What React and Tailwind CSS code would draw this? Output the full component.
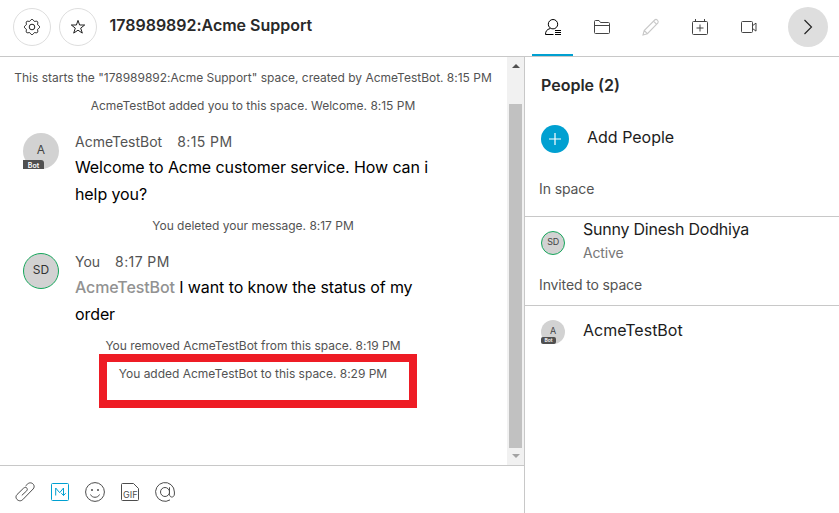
const icon = "fill-none stroke-current";

function SystemLine({ children, className = "" }) {
  return (
    <div className={`h-7 pr-px text-center text-[12px] leading-7 tracking-[-0.012px] whitespace-nowrap text-[#535353] ${className}`}>
      {children}
    </div>
  );
}

function Message({ avatar, name, time, children }) {
  return (
    <div className="mt-2.5 flex h-[78px] pl-[23px]">
      <div className="mt-[3px] w-[52px] shrink-0">{avatar}</div>
      <div className="whitespace-nowrap">
        <div className="flex h-6 gap-4 text-[14px] leading-6 text-[#535353]">
          <span className="-mr-px">{name}</span>
          <span className="tracking-[0.4px]">{time}</span>
        </div>
        <div className="text-[16px] leading-[27px] tracking-[-0.09px] text-black">{children}</div>
      </div>
    </div>
  );
}

function Gear() {
  const points = Array.from({ length: 64 }, (_, i) => {
    const a = (i / 64) * Math.PI * 2;
    const r = 6.9 + 0.8 * Math.cos(8 * a);
    return `${(8 + r * Math.sin(a)).toFixed(2)},${(8 - r * Math.cos(a)).toFixed(2)}`;
  }).join(" ");
  return (
    <svg width="16" height="16" viewBox="0 0 16 16" className={icon}>
      <polygon points={points} />
      <circle cx="8" cy="8" r="2.8" />
    </svg>
  );
}

function Header() {
  return (
    <header className="flex h-[57px] shrink-0 border-b border-[#c8c8c8]">
      <div className="flex w-[532px] pl-[13px] pt-2 text-[#222]">
        <div className="flex size-[38px] items-center justify-center rounded-full border border-[#dedede]">
          <Gear />
        </div>
        <div className="ml-2 flex size-[38px] items-center justify-center rounded-full border border-[#dedede]">
          <svg width="16" height="16" viewBox="0 0 16 16" className={icon}>
            <path d="M8 1.4 9.6 6h5.1l-4 3.1 1.6 5L8 11.2l-4.3 2.9 1.6-5-4-3.1h5.1z" />
          </svg>
        </div>
        <h1 className="ml-[12.5px] mt-[5px] text-[16px] leading-6 font-semibold tracking-[-0.02px] whitespace-nowrap text-[#292929]">
          178989892:Acme Support
        </h1>
      </div>
      <nav className="flex h-14 text-[#444]">
        <div className="flex w-[41px] justify-center border-b-2 border-[#00a0d1] pt-[18px] text-black">
          <svg width="18" height="18" viewBox="0 0 18 18" className={icon}>
            <circle cx="9" cy="6.2" r="4.700" />
            <path d="M9.500 16.500H1.500c0-3.300 1.300-5 4.700-6M11 12.500h6M11 14.500h6M11 16.500h6" />
          </svg>
        </div>
        <div className="flex w-[57px] justify-center pt-[18px]">
          <svg width="18" height="18" viewBox="0 0 18 18" className={icon}>
            <path d="M1.500 3.500Q1.500 2.500 2.500 2.500H6L7.500 4.500H15.500Q16.500 4.500 16.500 5.500V14.500Q16.500 15.500 15.500 15.500H2.500Q1.500 15.500 1.500 14.500ZM1.500 7.500H16.500" />
          </svg>
        </div>
        <div className="flex w-[41px] justify-center pt-[18px] text-[#c8c8c8]">
          <svg width="18" height="18" viewBox="0 0 18 18" className={icon} strokeWidth="1.1">
            <path d="m1 17 1.200-4.500L12.700 2Q14 .8 15.400 2.100T15.900 5L5.400 15.700ZM11.500 3.200l3.200 3.200M2.200 12.500l3.200 3.200" />
          </svg>
        </div>
        <div className="flex w-[57px] justify-center pt-[18px]">
          <svg width="18" height="18" viewBox="0 0 18 18" className={icon}>
            <rect x="1.500" y="3.500" width="15" height="13" rx="1" />
            <path d="M4.500 1v2.500M13.500 1v2.500M9 6.500v7M5.500 10h7" />
          </svg>
        </div>
        <div className="flex w-[41px] justify-center pt-[18px]">
          <svg width="18" height="18" viewBox="0 0 18 18" className={icon}>
            <rect x="1.500" y="3.500" width="11" height="11" rx="1" />
            <path d="m12.500 7.700 3.500-2.600v8l-3.500-2.600" />
          </svg>
        </div>
        <div className="ml-[19px] mt-[7px] flex size-10 items-center justify-center rounded-full bg-[#dedede] text-[#222]">
          <svg width="16" height="16" viewBox="0 0 16 16" className={icon} strokeWidth="1.150">
            <path d="m4.500 1 7 7-7 7" />
          </svg>
        </div>
      </nav>
    </header>
  );
}

function Scrollbar() {
  return (
    <div className="flex w-[17px] shrink-0 flex-col items-center bg-[#f1f1f1]">
      <svg width="17" height="17" className="shrink-0">
        <path d="M5 11h8L9 7z" fill="#505050" />
      </svg>
      <div className="mt-[30px] h-[344px] w-[13px] bg-[#c1c1c1]" />
      <svg width="17" height="17" className="shrink-0">
        <path d="M5 6h8L9 10z" fill="#a3a3a3" />
      </svg>
    </div>
  );
}

function Composer() {
  return (
    <div className="flex h-[47px] items-center gap-[15px] pl-[15px] pt-[5px] text-[#4c4c4c]">
      <svg width="20" height="20" viewBox="0 0 20 20" className={icon}>
        <path d="M10.500 4 12.600 2C16.200-1.400 21.400 3.400 18.100 7L7.700 17.700C4.200 21-1.300 16.200 2 12.600L8.400 6.300C11.100 4 13.500 6.800 11.700 8.800L6.800 13.400" />
      </svg>
      <svg width="20" height="20" viewBox="0 0 20 20" className="fill-none stroke-[#00a0d1]">
        <rect x="1.500" y="1.500" width="17" height="17" rx="1" />
        <path d="M5.700 13.500V6l4 4.700 3.800-4.700v7.500M11.300 11.200l2.200 2.300 2.200-2.300" />
      </svg>
      <svg width="20" height="20" viewBox="0 0 20 20" className={icon}>
        <circle cx="10" cy="10" r="9.400" />
        <path d="M5.500 12.500c1.500 3.700 7.500 3.700 9 0" />
        <circle cx="7" cy="8" r=".6" className="fill-current" />
        <circle cx="13" cy="8" r=".6" className="fill-current" />
      </svg>
      <svg width="20" height="20" viewBox="0 0 20 20" className={icon}>
        <path d="M13.500 1.500h-11q-1 0-1 1v15q0 1 1 1h15q1 0 1-1v-11z" />
        <text x="3" y="16" className="fill-current stroke-none font-['Inter'] text-[9px]">GIF</text>
      </svg>
      <svg width="20" height="20" viewBox="0 0 20 20" className={icon}>
        <path d="M15 17.900A9.400 9.400 0 1 1 19.400 10v2c0 4-4.900 4-4.900.3V5.300" />
        <circle cx="10" cy="10" r="4.500" />
      </svg>
    </div>
  );
}

function BotAvatar() {
  return (
    <div className="relative flex size-9 items-center justify-center rounded-full bg-[#d2d2d2] pb-[3px] text-[12px] text-[#444]">
      A
      <span className="absolute bottom-0 left-0 h-[9px] w-[21px] rounded-tr-[3px] bg-[#505050] text-center text-[7px] leading-[11px] font-semibold text-white">
        Bot
      </span>
    </div>
  );
}

function Conversation() {
  return (
    <div className="relative flex h-[408px]">
      <div className="w-[507px] overflow-hidden pt-[7px]">
        <SystemLine>This starts the "178989892:Acme Support" space, created by AcmeTestBot. 8:15 PM</SystemLine>
        <SystemLine>AcmeTestBot added you to this space. Welcome. 8:15 PM</SystemLine>
        <Message avatar={<BotAvatar />} name="AcmeTestBot" time="8:15 PM">
          <p>Welcome to Acme customer service. How can i</p>
          <p>help you?</p>
        </Message>
        <SystemLine className="mt-1">You deleted your message. 8:17 PM</SystemLine>
        <Message
          name="You"
          time="8:17 PM"
          avatar={
            <div className="flex size-9 items-center justify-center rounded-full border border-[#16a75c] bg-[#d2d2d2] pb-[3px] text-[12px] text-[#333]">
              SD
            </div>
          }
        >
          <p><span className="font-medium tracking-[-0.12px] text-[#929292]">AcmeTestBot</span> I want to know the status of my</p>
          <p>order</p>
        </Message>
        <SystemLine className="mt-1">You removed AcmeTestBot from this space. 8:19 PM</SystemLine>
        <SystemLine>You added AcmeTestBot to this space. 8:29 PM</SystemLine>
      </div>
      <Scrollbar />
      <div className="absolute left-[99px] top-[297px] h-[54px] w-[318px] border-8 border-[#ee1c25]" />
    </div>
  );
}

function PeoplePanel() {
  return (
    <aside className="flex-1 border-l border-[#c8c8c8] whitespace-nowrap">
      <h2 className="ml-4 mt-4 text-[16px] leading-6 font-semibold text-[#292929]">People (2)</h2>
      <div className="ml-4 mt-7 flex h-7 items-center gap-[18px]">
        <div className="flex size-7 items-center justify-center rounded-full bg-[#00a0d1] text-white">
          <svg width="14" height="14" className={icon}>
            <path d="M7 1v12M1 7h12" strokeWidth="1.200" />
          </svg>
        </div>
        <span className="pb-[5px] text-[16px] text-[#1c1c1c]">Add People</span>
      </div>
      <div className="ml-3.5 mt-6 h-[39px] text-[14px] leading-6 tracking-[-0.1px] text-[#535353]">In space</div>
      <div className="flex h-[56px] border-t border-[#c8c8c8] pl-4">
        <div className="mt-3.5 flex size-6 items-center justify-center rounded-full border border-[#16a75c] bg-[#d2d2d2] pb-0.5 text-[9px] tracking-[-0.3px] text-[#444]">
          SD
        </div>
        <div className="ml-[18px]">
          <div className="text-[16px] leading-6 tracking-[-0.23px] text-[#1c1c1c]">Sunny Dinesh Dodhiya</div>
          <div className="text-[14px] leading-6 tracking-[-0.15px] text-[#777]">Active</div>
        </div>
      </div>
      <div className="ml-3.5 h-[33px] pt-px text-[14px] leading-6 tracking-[-0.13px] text-[#535353]">Invited to space</div>
      <div className="flex border-t border-[#c8c8c8] pl-4">
        <div className="relative mt-3.5 flex size-6 items-center justify-center rounded-full bg-[#d2d2d2] pb-0.5 text-[9px] text-[#444]">
          A
          <span className="absolute bottom-0 left-0 h-[7px] w-[15px] rounded-[2px] bg-[#505050] text-center text-[5px] leading-[6px] font-semibold text-white">
            Bot
          </span>
        </div>
        <div className="ml-[18px] mt-3 text-[16px] leading-6 text-[#1c1c1c]">AcmeTestBot</div>
      </div>
    </aside>
  );
}

export default function App() {
  return (
    <div className="flex h-[513px] w-[839px] flex-col overflow-hidden bg-white font-['Inter','Liberation_Sans',sans-serif]">
      <Header />
      <main className="flex flex-1">
        <section className="w-[524px]">
          <Conversation />
          <div className="border-t border-[#c8c8c8]">
            <Composer />
          </div>
        </section>
        <PeoplePanel />
      </main>
    </div>
  );
}
